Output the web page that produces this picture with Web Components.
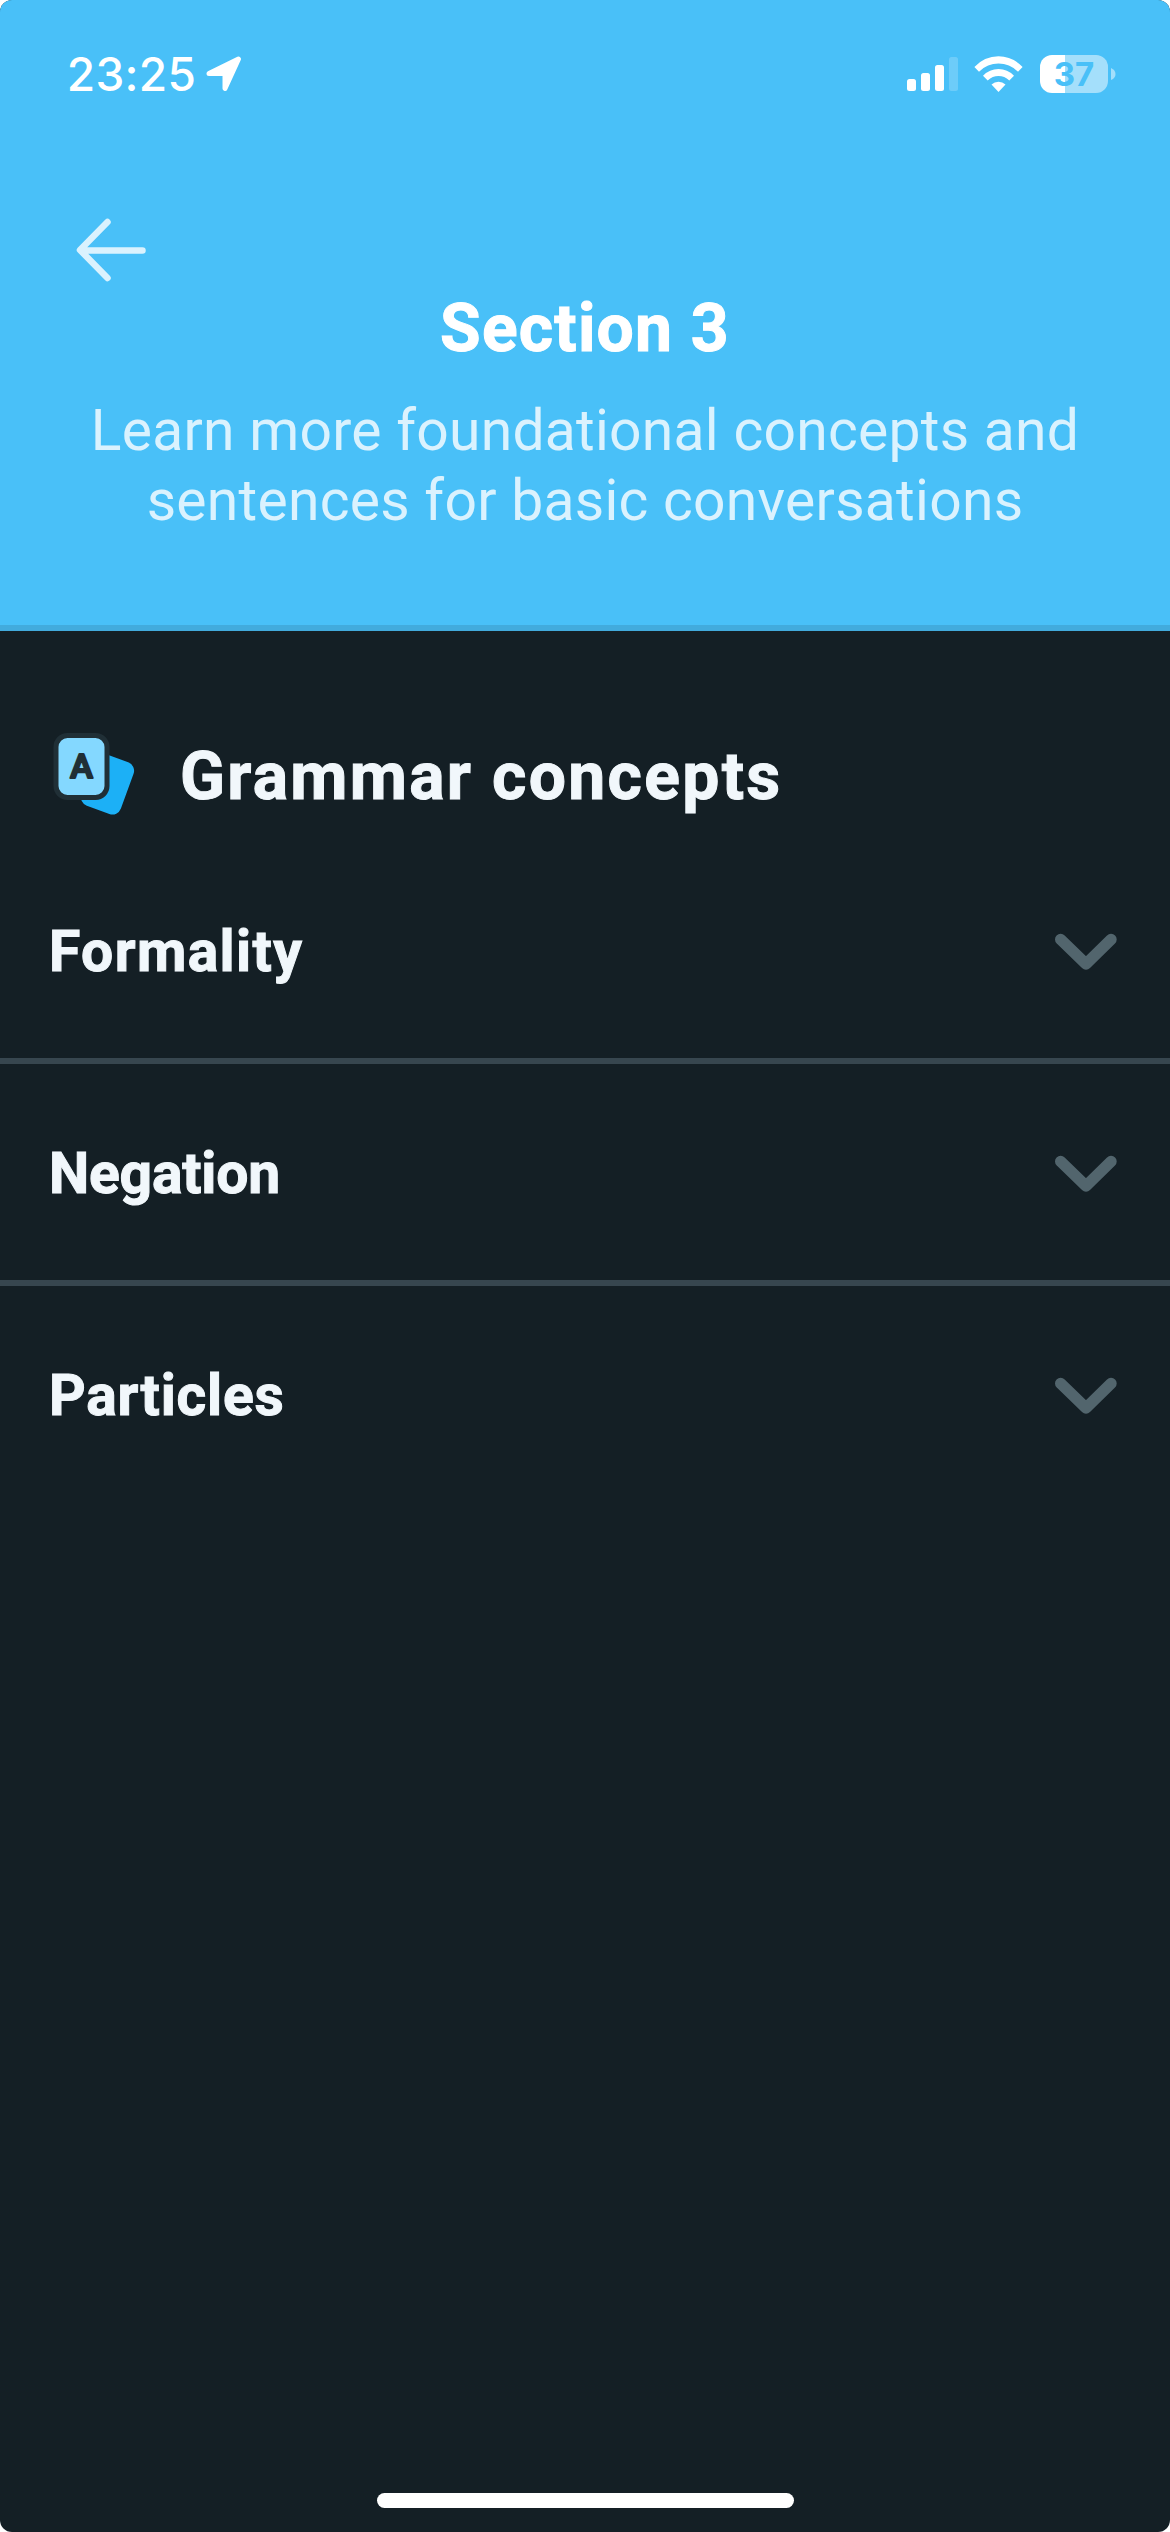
<!DOCTYPE html>
<html lang="en">
<head>
<meta charset="utf-8">
<title>Section 3</title>
<style>
    body {
        margin: 0;
        background: white;
    }
</style>
</head>
<body>

<section-screen>
    <section-header slot="header">
        <status-bar slot="status" data-time="23:25" data-battery="37"></status-bar>
        <span slot="title">Section 3</span>
        <span slot="line">Learn more foundational concepts and</span>
        <span slot="line">sentences for basic conversations</span>
    </section-header>
    <concepts-heading>Grammar concepts</concepts-heading>
    <concept-row style="--track: 1.4px">Formality</concept-row>
    <concept-row style="--track: -0.2px">Negation</concept-row>
    <concept-row style="--track: 0.8px">Particles</concept-row>
</section-screen>

<script>
class SectionScreen extends HTMLElement {

    connectedCallback() {
        this.attachShadow({mode: "open"})
        this.shadowRoot.innerHTML = `
            <style>
                :host {
                    --sky: #49c0f8;
                    --text: #f1f7fb;
                    --divider: #37464f;
                    display: flex;
                    flex-direction: column;
                    width: 1170px;
                    height: 2532px;
                    border-radius: 12px;
                    overflow: hidden;
                    background: #141f25;
                    color: var(--text);
                    font-family: Roboto, "Liberation Sans", sans-serif;
                    white-space: nowrap;
                }
                main {
                    flex: 1;
                }
                .home {
                    width: 417px;
                    height: 15px;
                    margin: 0 auto 24px;
                    border-radius: 8px;
                    background: white;
                }
            </style>
            <slot name="header"></slot>
            <main><slot></slot></main>
            <div class="home"></div>
        `;
    }
}

class StatusBar extends HTMLElement {

    connectedCallback() {
        this.attachShadow({mode: "open"})
        this.shadowRoot.innerHTML = `
            <style>
                :host {
                    display: flex;
                    align-items: center;
                    height: 148px;
                    padding: 0 54px 0 58px;
                    box-sizing: border-box;
                    color: white;
                    font-family: Inter, sans-serif;
                }
                svg {
                    display: block;
                }
                .time {
                    width: 147px;
                    font-size: 46px;
                    font-weight: 500;
                    letter-spacing: 0.3px;
                }
                .icons {
                    display: flex;
                    align-items: center;
                    margin-left: auto;
                }
                .signal { margin-right: 16px; }
                .wifi { margin-right: 17px; }
                .battery {
                    width: 68px;
                    height: 38px;
                    border-radius: 12px;
                    background: linear-gradient(90deg, white 25px, #a4dffb 25px);
                    color: #49c0f8;
                    font-size: 33px;
                    font-weight: 700;
                    line-height: 38px;
                    text-align: center;
                }
                .nub { margin-left: 3px; }
            </style>
            <div class="time">${this.dataset.time}</div>
            <svg width="38" height="38" viewBox="0 0 38 38">
                <path d="M4 18.5 L33.5 4 L20 33.5 V18.5 Z" fill="white" stroke="white" stroke-width="5" stroke-linejoin="round"/>
            </svg>
            <div class="icons">
                <svg class="signal" width="51" height="34" viewBox="0 0 51 34" fill="white">
                    <rect x="0" y="22" width="9" height="12" rx="2.5"/>
                    <rect x="14" y="16" width="9" height="18" rx="2.5"/>
                    <rect x="28" y="8" width="9" height="26" rx="2.5"/>
                    <rect x="42" y="0" width="9" height="34" rx="2.5" opacity="0.2"/>
                </svg>
                <svg class="wifi" width="49" height="36" viewBox="0 0 49 36" fill="white">
                    <path d="M0.4 11 Q10.5 0.3 24.5 0.3 T48.6 11 L44 15.7 Q35.5 7.6 24.5 7.6 T5 15.7 Z"/>
                    <path d="M9 19.7 Q15.5 13 24.5 13 T40 19.7 L35.3 24.4 Q30.5 20 24.5 20 T13.7 24.4 Z"/>
                    <path d="M17.5 28.6 Q20.5 25.7 24.5 25.7 T31.5 28.6 L24.5 36 Z"/>
                </svg>
                <div class="battery">${this.dataset.battery}</div>
                <svg class="nub" width="5" height="12" viewBox="0 0 5 12">
                    <path d="M0 0 Q4.5 2 4.5 6 T0 12 Z" fill="#a4dffb"/>
                </svg>
            </div>
        `;
    }
}

class SectionHeader extends HTMLElement {

    connectedCallback() {
        this.attachShadow({mode: "open"})
        this.shadowRoot.innerHTML = `
            <style>
                :host {
                    display: flex;
                    flex-direction: column;
                    height: 631px;
                    box-sizing: border-box;
                    border-bottom: 6px solid #42abdd;
                    background: var(--sky);
                    text-align: center;
                }
                .back {
                    display: block;
                    margin: 69px 0 0 74px;
                }
                h1 {
                    margin: 5px 0 0;
                    color: white;
                    font-size: 66px;
                    font-weight: 700;
                    line-height: 80px;
                    letter-spacing: 1.2px;
                    -webkit-text-stroke: 1px white;
                    stroke-linejoin: round;
                }
                p {
                    display: flex;
                    flex-direction: column;
                    margin: 27px 0 0;
                    color: #daf2fe;
                    font-size: 57px;
                    line-height: 70px;
                    letter-spacing: 0.26px;
                }
            </style>
            <slot name="status"></slot>
            <svg class="back" width="74" height="67" viewBox="0 0 74 67">
                <path d="M33.5 5 L6 33 L33.5 61 M7 33.5 H68.5" fill="none" stroke="#daf2fe" stroke-width="6.5" stroke-linecap="round" stroke-linejoin="round"/>
            </svg>
            <h1><slot name="title"></slot></h1>
            <p><slot name="line"></slot></p>
        `;
    }
}

class ConceptsHeading extends HTMLElement {

    connectedCallback() {
        this.attachShadow({mode: "open"})
        this.shadowRoot.innerHTML = `
            <style>
                :host {
                    display: flex;
                    align-items: center;
                    gap: 42px;
                    padding: 88px 0 11px 52px;
                    height: 112px;
                }
                h2 {
                    margin: 0;
                    padding-top: 4px;
                    font-size: 66px;
                    font-weight: 700;
                    line-height: 80px;
                    letter-spacing: 2.3px;
                    -webkit-text-stroke: 1px var(--text);
                    stroke-linejoin: round;
                }
            </style>
            <svg width="86" height="88" viewBox="0 0 86 88">
                <rect x="34.5" y="25.5" width="42" height="55" rx="9" transform="rotate(20 55.5 53)" fill="#1cb0f6"/>
                <rect x="4" y="4.5" width="51" height="62" rx="11.5" fill="#84d8ff" stroke="#202f36" stroke-width="5"/>
                <text x="29.5" y="46.5" text-anchor="middle" font-size="34" font-weight="500" fill="#202f36" stroke="#202f36" stroke-width="2.2" stroke-linejoin="round">A</text>
            </svg>
            <h2><slot></slot></h2>
        `;
    }
}

class ConceptRow extends HTMLElement {

    connectedCallback() {
        this.attachShadow({mode: "open"})
        this.shadowRoot.innerHTML = `
            <style>
                :host {
                    display: flex;
                    align-items: center;
                    justify-content: space-between;
                    height: 222px;
                    box-sizing: border-box;
                    padding: 4px 48px 0 49px;
                    border-bottom: 6px solid var(--divider);
                }
                :host(:last-of-type) {
                    border-color: transparent;
                }
                h3 {
                    margin: 0;
                    font-size: 57px;
                    font-weight: 700;
                    line-height: 70px;
                    letter-spacing: var(--track);
                    -webkit-text-stroke: 1px var(--text);
                    stroke-linejoin: round;
                }
            </style>
            <h3><slot></slot></h3>
            <svg width="72" height="46" viewBox="0 0 72 46">
                <path d="M10.7 10.5 L36 35 L61 10.5" fill="none" stroke="#52656d" stroke-width="11.4" stroke-linecap="round" stroke-linejoin="round"/>
            </svg>
        `;
    }
}

window.customElements.define('section-screen', SectionScreen);
window.customElements.define('status-bar', StatusBar);
window.customElements.define('section-header', SectionHeader);
window.customElements.define('concepts-heading', ConceptsHeading);
window.customElements.define('concept-row', ConceptRow);
</script>
</body>
</html>
